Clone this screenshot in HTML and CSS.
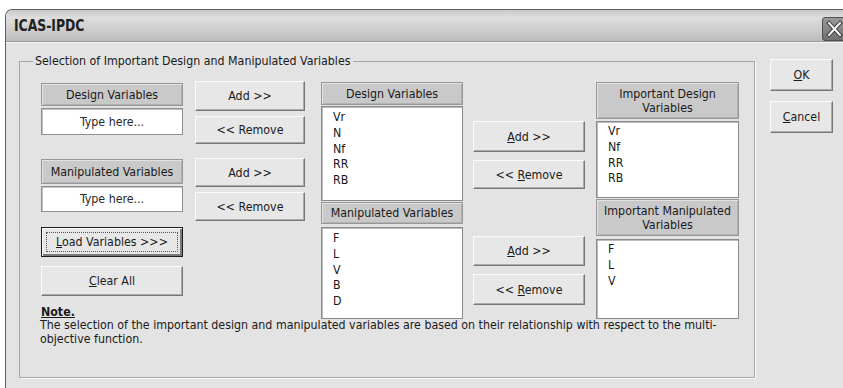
FILE: index.html
```html
<!DOCTYPE html>
<html>
<head>
<meta charset="utf-8">
<link rel="stylesheet" href="styles.css">
</head>
<body>
<div class="window">
  <div class="titlebar">
    <span class="title">ICAS-IPDC</span>
    <span class="close">
      <svg width="24" height="22" viewBox="0 0 24 22">
        <path d="M6 5 L17 17 M17 5 L6 17" stroke="#3a3a3a" stroke-width="4" stroke-linecap="square" fill="none"/>
        <path d="M6 5 L17 17 M17 5 L6 17" stroke="#f4f4f4" stroke-width="2" stroke-linecap="square" fill="none"/>
      </svg>
    </span>
  </div>
  <div class="body">
    <fieldset class="frame">
      <legend>Selection of Important Design and Manipulated Variables</legend>
      <div class="cols">
        <div class="col c1">
          <div class="hdr h1">Design Variables</div>
          <div class="tb t1">Type here...</div>
          <div class="hdr h2">Manipulated Variables</div>
          <div class="tb t2">Type here...</div>
          <button class="btn load"><span class="focus"><span><u>L</u>oad Variables &gt;&gt;&gt;</span></span></button>
          <button class="btn clear"><span><u>C</u>lear All</span></button>
          <div class="note-title">Note.</div>
        </div>
        <div class="col c2">
          <button class="btn b1"><span>Add &gt;&gt;</span></button>
          <button class="btn b2"><span>&lt;&lt; Remove</span></button>
          <button class="btn b3"><span>Add &gt;&gt;</span></button>
          <button class="btn b4"><span>&lt;&lt; Remove</span></button>
        </div>
        <div class="col c3">
          <div class="hdr m1">Design Variables</div>
          <ul class="list l1"><li>Vr</li><li>N</li><li>Nf</li><li>RR</li><li>RB</li></ul>
          <div class="hdr m2">Manipulated Variables</div>
          <ul class="list l2"><li>F</li><li>L</li><li>V</li><li>B</li><li>D</li></ul>
        </div>
        <div class="col c4">
          <button class="btn r1"><span><u>A</u>dd &gt;&gt;</span></button>
          <button class="btn r2"><span>&lt;&lt; <u>R</u>emove</span></button>
          <button class="btn r3"><span><u>A</u>dd &gt;&gt;</span></button>
          <button class="btn r4"><span>&lt;&lt; <u>R</u>emove</span></button>
        </div>
        <div class="col c5">
          <div class="hdr tall i1">Important Design<br>Variables</div>
          <ul class="list k1"><li>Vr</li><li>Nf</li><li>RR</li><li>RB</li></ul>
          <div class="hdr tall i2">Important Manipulated<br>Variables</div>
          <ul class="list k2"><li>F</li><li>L</li><li>V</li></ul>
        </div>
      </div>
      <p class="note">The selection of the important design and manipulated variables are based on their relationship with respect to the multi-<br>objective function.</p>
    </fieldset>
    <div class="side">
      <button class="btn ok"><span><u>O</u>K</span></button>
      <button class="btn cancel"><span><u>C</u>ancel</span></button>
    </div>
  </div>
</div>
</body>
</html>
```
FILE: styles.css
```css
html, body {
  margin: 0;
  padding: 0;
  background: #ffffff;
  overflow: hidden;
}
body {
  font-family: "DejaVu Sans Condensed", "Liberation Sans", sans-serif;
  font-size: 12.3px;
  color: #1a1a1a;
}
.window {
  margin: 9px 0 0 5px;
  width: 845px;
  height: 379px;
  box-sizing: border-box;
  border: 1px solid #5e5e5e;
  border-bottom: none;
  border-radius: 7px 7px 0 0;
  background: #e3e3e3;
  overflow: hidden;
}
.titlebar {
  height: 31px;
  border-bottom: 1px solid #9a9a9a;
  background: linear-gradient(#c9c9c9, #dedede 25%, #cdcdcd 65%, #bcbcbc);
  display: flex;
  align-items: center;
  justify-content: space-between;
  padding-left: 8px;
}
.title {
  font-family: "Liberation Sans Narrow", "DejaVu Sans Condensed", sans-serif;
  font-weight: bold;
  font-size: 16px;
  color: #202020;
  transform: scaleX(0.86);
  transform-origin: left center;
}
.close {
  width: 24px;
  height: 22px;
  margin-right: 1px;
  margin-top: 6px;
  border: 1px solid #4e4e4e;
  border-radius: 3px;
  background: linear-gradient(#9a9a9a, #707070);
  display: flex;
}
.body {
  display: flex;
  padding-left: 13px;
  border-top: 1px solid #f4f4f4;
}
.frame {
  margin: 10px 0 0 0;
  width: 736px;
  box-sizing: border-box;
  padding: 12px 15px 31px 13px;
  border: 1px solid #a6a6a6;
  box-shadow: 1px 1px 0 #fbfbfb;
  min-width: 0;
}
.frame legend {
  padding: 0 2px;
  line-height: 16px;
}
.cols {
  display: flex;
  margin-left: 8px;
}
.col {
  display: flex;
  flex-direction: column;
}
.c1 { width: 142px; }
.c2 { width: 110px; margin-left: 12px; }
.c3 { width: 142px; margin-left: 16px; }
.c4 { width: 112px; margin-left: 10px; }
.c5 { width: 143px; margin-left: 11px; }

.hdr {
  box-sizing: border-box;
  background: #c9c9c9;
  border: 1px solid #979797;
  box-shadow: inset 1px 1px 0 #e2e2e2, inset -1px -1px 0 #b2b2b2;
  text-align: center;
  display: flex;
  align-items: center;
  justify-content: center;
  line-height: 14px;
}
.tb {
  box-sizing: border-box;
  background: #fff;
  border: 1px solid #8e8e8e;
  box-shadow: inset 1px 1px 0 #c4c4c4;
  text-align: center;
  display: flex;
  align-items: center;
  justify-content: center;
  color: #2a2a2a;
}
.btn {
  box-sizing: border-box;
  font: inherit;
  color: inherit;
  padding: 0;
  margin: 0;
  background: #e7e7e7;
  border: 1px solid;
  border-color: #fafafa #777 #777 #fafafa;
  box-shadow: inset -1px -1px 0 #ababab;
  display: flex;
  align-items: center;
  justify-content: center;
}
.h1 { margin-top: 2px; height: 23px; }
.t1 { margin-top: 2px; height: 27px; }
.h2 { margin-top: 24px; height: 25px; }
.t2 { margin-top: 2px; height: 26px; }
.load {
  margin-top: 15px;
  height: 30px;
  border: 1px solid #1e1e1e;
  box-shadow: inset 1px 1px 0 #fafafa, inset -2px -2px 0 #7a7a7a;
  padding: 4px;
}
.load .focus {
  flex: 1;
  align-self: stretch;
  border: 1px dotted #555;
  display: flex;
  align-items: center;
  justify-content: center;
}
.clear { margin-top: 9px; height: 30px; }
.note-title {
  margin-top: 9px;
  line-height: 14px;
  font-weight: bold;
  text-decoration: underline;
}

.b1 { height: 30px; }
.b2 { margin-top: 5px; height: 28px; }
.b3 { margin-top: 14px; height: 29px; }
.b4 { margin-top: 5px; height: 29px; }

.list {
  list-style: none;
  margin: 0;
  box-sizing: border-box;
  background: #fff;
  border: 1px solid #8a8a8a;
  box-shadow: inset 1px 1px 0 #bcbcbc;
  padding: 3px 0 0 11px;
  line-height: 15.8px;
}
.m1 { margin-top: 1px; height: 23px; }
.l1 { margin-top: 1px; height: 95px; }
.m2 { margin-top: 1px; height: 22px; }
.l2 { margin-top: 3px; height: 92px; }

.r1 { margin-top: 40px; height: 31px; }
.r2 { margin-top: 8px; height: 29px; }
.r3 { margin-top: 47px; height: 30px; }
.r4 { margin-top: 8px; height: 31px; }

.tall { line-height: 14px; }
.i1 { margin-top: 1px; height: 37px; }
.k1 { margin-top: 2px; height: 77px; padding-top: 2px; }
.i2 { margin-top: 1px; height: 37px; }
.k2 { margin-top: 3px; height: 80px; padding-top: 2px; }

.note {
  margin: 0 0 0 7px;
  line-height: 13.5px;
}
.side {
  display: flex;
  flex-direction: column;
  margin-left: 15px;
}
.ok { margin-top: 16px; width: 63px; height: 32px; }
.cancel { margin-top: 10px; width: 63px; height: 32px; }
```
